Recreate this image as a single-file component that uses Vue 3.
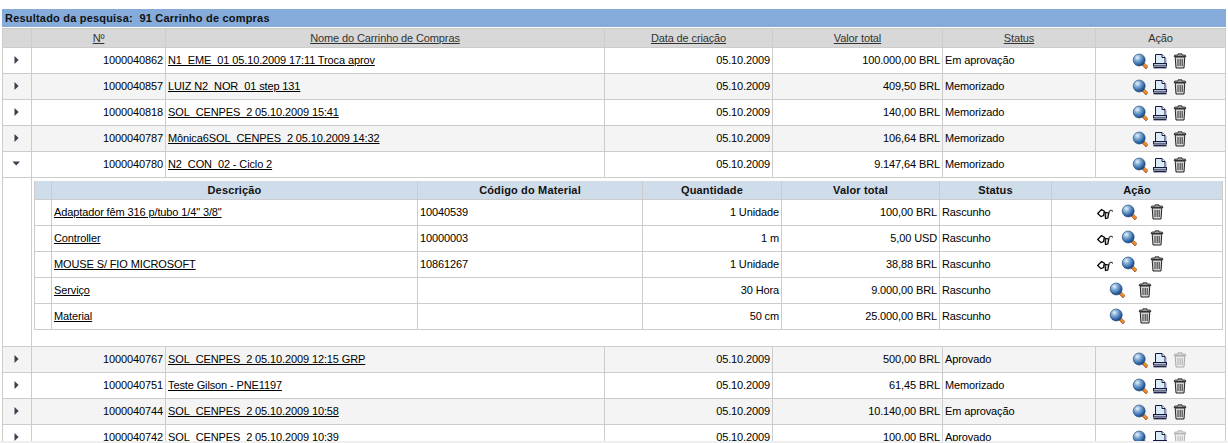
<template>
  <div class="page">
    <svg class="defs" aria-hidden="true">
      <defs>
        <radialGradient id="lens" cx="0.35" cy="0.3" r="0.8">
          <stop offset="0" stop-color="#eaf3fc" />
          <stop offset="0.35" stop-color="#7ba9d6" />
          <stop offset="0.8" stop-color="#1f5596" />
          <stop offset="1" stop-color="#123464" />
        </radialGradient>
        <linearGradient id="handle" x1="0" y1="1" x2="1" y2="0">
          <stop offset="0" stop-color="#d0301c" />
          <stop offset="0.5" stop-color="#f08a20" />
          <stop offset="1" stop-color="#f4d84a" />
        </linearGradient>
      </defs>
      <symbol id="i-mag" viewBox="0 0 16 16">
        <path d="M9.6 11.6 L11.6 9.4 L16 13.6 L14 16 Z" fill="url(#handle)" stroke="#5e2416" stroke-width="0.5" />
        <circle cx="7.2" cy="7" r="6" fill="url(#lens)" stroke="#1d3f70" stroke-width="0.6" />
      </symbol>
      <symbol id="i-print" viewBox="0 0 16 16">
        <path d="M3.5 1.5 H10 L13 4.5 V10.5 H3.5 Z" fill="#dcebf8" stroke="#15193f" />
        <path d="M10 1.5 V4.5 H13" fill="#fff" stroke="#15193f" />
        <rect x="1.5" y="10.5" width="13" height="2.5" fill="#b4c1d4" stroke="#15193f" />
        <path d="M1.5 14.7 H14.5" stroke="#15193f" stroke-width="1.3" />
        <path d="M14 5 V10" stroke="#9a9ac8" />
      </symbol>
      <symbol id="i-trash" viewBox="0 0 16 16">
        <path d="M2 3.5 H14 L13.2 2 H10 V0.8 H6 V2 H2.8 Z" fill="#9a9a9a" stroke="#222" stroke-width="0.8" />
        <path d="M3.2 4 H12.8 L12 15 H4 Z" fill="#d4d4d4" stroke="#222" />
        <path d="M6 6 V13 M8.2 6 V13 M10.2 6 V13" stroke="#222" stroke-width="0.9" />
      </symbol>
      <symbol id="i-glass" viewBox="0 0 16 16">
        <path d="M0.7 9.5 L4.5 5.5 L7.2 7 L6.6 11.5 L4 12.6 Z" fill="#fff" stroke="#000" stroke-width="1.2" />
        <path d="M7 8 C7.6 7.2 8.2 7.6 8.4 8.6" fill="none" stroke="#000" stroke-width="1" />
        <path d="M8 8.5 L8.5 14.5 L10.8 14 L11.8 9 Z" fill="#cfcfcf" stroke="#000" stroke-width="1.2" />
        <path d="M11.6 9 C12.4 5.8 15 5.4 15.6 7.6" fill="none" stroke="#333" stroke-width="1.1" />
      </symbol>
    </svg>

    <div class="view">
      <div class="title">Resultado da pesquisa:&nbsp; 91 Carrinho de compras</div>
      <table class="grid">
        <colgroup>
          <col class="c1" /><col class="c2" /><col class="c3" /><col class="c4" />
          <col class="c5" /><col class="c6" /><col class="c7" />
        </colgroup>
        <thead>
          <tr>
            <th></th>
            <th><u>Nº</u></th>
            <th><u>Nome do Carrinho de Compras</u></th>
            <th><u>Data de criação</u></th>
            <th><u>Valor total</u></th>
            <th><u>Status</u></th>
            <th>Ação</th>
          </tr>
        </thead>
        <tbody>
          <template v-for="(cart, i) in carts" :key="cart.id">
            <tr :class="{ alt: i % 2 === 1 }">
              <td class="toggle">
                <svg v-if="cart.open" width="9" height="5" viewBox="0 0 9 5"><path d="M0.5 0.5 H8 L4.2 4.5 Z" fill="#3d3d50" /></svg>
                <svg v-else width="5" height="8" viewBox="0 0 5 8"><path d="M0.5 0 L4.6 4 L0.5 8 Z" fill="#3d3d50" /></svg>
              </td>
              <td class="num">{{ cart.id }}</td>
              <td><a>{{ cart.name }}</a></td>
              <td class="num">05.10.2009</td>
              <td class="num">{{ cart.total }}</td>
              <td>{{ cart.status }}</td>
              <td>
                <div class="actions">
                  <svg class="ico"><use href="#i-mag" /></svg>
                  <svg class="ico"><use href="#i-print" /></svg>
                  <svg class="ico" :class="{ off: cart.locked }"><use href="#i-trash" /></svg>
                </div>
              </td>
            </tr>
            <tr v-if="cart.open" class="detail">
              <td></td>
              <td colspan="6" class="holder">
                <table class="grid inner">
                  <colgroup>
                    <col class="d1" /><col class="d2" /><col class="d3" /><col class="d4" />
                    <col class="d5" /><col class="d6" /><col class="d7" />
                  </colgroup>
                  <thead>
                    <tr>
                      <th></th>
                      <th>Descrição</th>
                      <th>Código do Material</th>
                      <th>Quantidade</th>
                      <th>Valor total</th>
                      <th>Status</th>
                      <th>Ação</th>
                    </tr>
                  </thead>
                  <tbody>
                    <tr v-for="item in items" :key="item.desc">
                      <td></td>
                      <td><a>{{ item.desc }}</a></td>
                      <td>{{ item.code }}</td>
                      <td class="num">{{ item.qty }}</td>
                      <td class="num">{{ item.total }}</td>
                      <td>Rascunho</td>
                      <td>
                        <div class="actions small">
                          <svg v-if="item.code" class="ico glass"><use href="#i-glass" /></svg>
                          <svg class="ico"><use href="#i-mag" /></svg>
                          <svg class="ico bin"><use href="#i-trash" /></svg>
                        </div>
                      </td>
                    </tr>
                  </tbody>
                </table>
              </td>
            </tr>
          </template>
        </tbody>
      </table>
    </div>
    <div class="bar"></div>
  </div>
</template>

<script setup>
const carts = [
  { id: "1000040862", name: "N1_EME_01 05.10.2009 17:11 Troca aprov", total: "100.000,00 BRL", status: "Em aprovação" },
  { id: "1000040857", name: "LUIZ N2_NOR_01 step 131", total: "409,50 BRL", status: "Memorizado" },
  { id: "1000040818", name: "SOL_CENPES_2 05.10.2009 15:41", total: "140,00 BRL", status: "Memorizado" },
  { id: "1000040787", name: "Mônica6SOL_CENPES_2 05.10.2009 14:32", total: "106,64 BRL", status: "Memorizado" },
  { id: "1000040780", name: "N2_CON_02 - Ciclo 2", total: "9.147,64 BRL", status: "Memorizado", open: true },
  { id: "1000040767", name: "SOL_CENPES_2 05.10.2009 12:15 GRP", total: "500,00 BRL", status: "Aprovado", locked: true },
  { id: "1000040751", name: "Teste Gilson - PNE1197", total: "61,45 BRL", status: "Memorizado" },
  { id: "1000040744", name: "SOL_CENPES_2 05.10.2009 10:58", total: "10.140,00 BRL", status: "Em aprovação" },
  { id: "1000040742", name: "SOL_CENPES_2 05.10.2009 10:39", total: "100,00 BRL", status: "Aprovado", locked: true },
];

const items = [
  { desc: 'Adaptador fêm 316 p/tubo 1/4" 3/8"', code: "10040539", qty: "1 Unidade", total: "100,00 BRL" },
  { desc: "Controller", code: "10000003", qty: "1 m", total: "5,00 USD" },
  { desc: "MOUSE S/ FIO MICROSOFT", code: "10861267", qty: "1 Unidade", total: "38,88 BRL" },
  { desc: "Serviço", code: "", qty: "30 Hora", total: "9.000,00 BRL" },
  { desc: "Material", code: "", qty: "50 cm", total: "25.000,00 BRL" },
];
</script>

<style>
html,
body {
  margin: 0;
  background: #fff;
  overflow: hidden;
}
</style>

<style scoped>
.page {
  display: flex;
  flex-direction: column;
  height: 443px;
  padding-top: 9px;
  box-sizing: border-box;
  font-family: "Liberation Sans", Arial, sans-serif;
  font-size: 11px;
  color: #000;
}

.defs {
  display: block;
  width: 0;
  height: 0;
}

.view {
  flex: 1;
  min-height: 0;
  overflow: hidden;
  padding-left: 2px;
}

.bar {
  height: 2px;
  background: #efefef;
}

.title {
  width: 1224px;
  height: 18px;
  line-height: 18px;
  box-sizing: border-box;
  padding-left: 3px;
  margin-bottom: 1px;
  background: #84abda;
  font-weight: bold;
  letter-spacing: 0.2px;
  color: #111;
}

.grid {
  table-layout: fixed;
  border-collapse: separate;
  border-spacing: 0;
  width: 1224px;
  border-left: 1px solid #ccc;
  border-top: 1px solid #ccc;
  letter-spacing: -0.12px;
}

.c1 { width: 29px; }
.c2 { width: 134px; }
.c3 { width: 439px; }
.c4 { width: 168px; }
.c5 { width: 170px; }
.c6 { width: 153px; }
.c7 { width: 130px; }

.d1 { width: 17px; }
.d2 { width: 366px; }
.d3 { width: 225px; }
.d4 { width: 139px; }
.d5 { width: 158px; }
.d6 { width: 112px; }
.d7 { width: 171px; }

th,
td {
  box-sizing: border-box;
  border-right: 1px solid #ccc;
  border-bottom: 1px solid #ccc;
  white-space: nowrap;
  overflow: hidden;
}

th {
  height: 19px;
  padding: 0 2px;
  background: #d8d8d8;
  color: #333;
  font-weight: normal;
  text-align: center;
}

td {
  height: 26px;
  padding: 0 2px 2px;
}

.alt td {
  background: #f4f4f4;
}

a {
  color: #000;
  text-decoration: underline;
}

.num {
  text-align: right;
}

.toggle {
  text-align: center;
  line-height: 0;
  padding-right: 3px;
}

.holder {
  height: 168px;
  padding: 3px 0 16px 2px;
  vertical-align: top;
}

.inner {
  width: 1189px;
  border-top: 0;
}

.inner th {
  height: 19px;
  background: #cfdce9;
  color: #111;
  font-weight: bold;
  letter-spacing: 0.15px;
}

.actions {
  display: flex;
  justify-content: center;
  gap: 4px;
  padding: 2px 2px 0 0;
}

.small {
  gap: 0;
  padding: 0 13px 0 0;
}

.ico {
  display: block;
  width: 16px;
  height: 16px;
}

.off {
  opacity: 0.35;
}

.glass {
  margin-right: 8px;
}

.bin {
  margin-left: 12px;
}
</style>
